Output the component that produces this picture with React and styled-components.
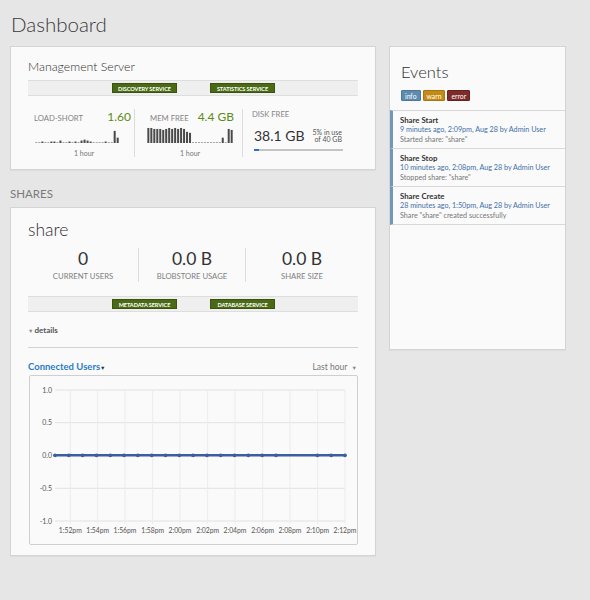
import React from "react";
import styled, { createGlobalStyle } from "styled-components";

const Global = createGlobalStyle`
  html, body { margin: 0; padding: 0; background: #e6e6e6; }
  body { font-family: Lato, "Open Sans", "Liberation Sans", sans-serif; color: #333; }
  * { box-sizing: border-box; }
`;

const Page = styled.div`
  width: 590px;
  height: 600px;
  padding: 12px 0 0 10px;
  background: #e6e6e6;
`;

const Title = styled.h1`
  margin: 0 0 9px 1px;
  font-size: 20.5px;
  font-weight: 300;
  line-height: 25px;
  color: #3a3a3a;
`;

const Columns = styled.div`
  display: flex;
  align-items: flex-start;
  gap: 13px;
`;

const LeftCol = styled.div`
  width: 366px;
  display: flex;
  flex-direction: column;
`;

const Card = styled.section`
  background: #fafafa;
  border: 1px solid #d4d4d4;
  box-shadow: 0 1px 1px rgba(0,0,0,0.04);
  width: ${p => p.$w || "366px"};
  height: ${p => p.$h || "auto"};
  padding: ${p => p.$pad || "0 17px"};
`;

const CardTitle = styled.h2`
  margin: 0;
  font-weight: ${p => p.$weight || 300};
  color: #2e2e2e;
  font-size: ${p => p.$size || "12px"};
  line-height: ${p => p.$lh || "16px"};
`;

const ServiceBar = styled.div`
  height: 16px;
  background: #efefef;
  border-top: 1px solid #dedede;
  border-bottom: 1px solid #dedede;
  display: flex;
  align-items: center;
  padding-left: 84px;
  gap: 33px;
  margin-top: ${p => p.$mt || "0"};
`;

const ServiceBadge = styled.span`
  display: inline-flex;
  align-items: center;
  justify-content: center;
  width: 65px;
  height: 10px;
  background: #4a6a16;
  border: 1px solid #3a5410;
  color: #fff;
  font-size: 5.6px;
  font-weight: 700;
  letter-spacing: -0.1px;
  white-space: nowrap;
  text-transform: uppercase;
`;

const StatsRow = styled.div`
  display: flex;
  margin-top: 13px;
  height: 48px;
`;

const StatCol = styled.div`
  width: ${p => p.$w};
  padding: ${p => p.$pad};
  border-right: ${p => (p.$last ? "none" : "1px solid #dcdcdc")};
  display: flex;
  flex-direction: column;
`;

const StatHead = styled.div`
  display: flex;
  justify-content: space-between;
  align-items: baseline;
  height: 16px;
  white-space: nowrap;
`;

const StatLabel = styled.span`
  font-size: 7.7px;
  color: #858585;
  text-transform: uppercase;
  padding-left: ${p => p.$pl || "0"};
`;

const StatValue = styled.span`
  font-size: 12px;
  color: #5a8c17;
  padding-right: ${p => p.$pr || "3px"};
`;

const Spark = styled.svg`
  display: block;
  margin-top: 2px;
`;

const HourLabel = styled.div`
  font-size: 7px;
  color: #777;
  text-align: center;
  margin-top: 6px;
`;

const DiskRow = styled.div`
  display: flex;
  align-items: center;
  gap: 8px;
  margin: 1px 0 0 2px;
`;

const DiskValue = styled.span`
  font-size: 14px;
  color: #333;
  line-height: 20px;
`;

const DiskNote = styled.span`
  font-size: 7px;
  line-height: 7.5px;
  color: #555;
  text-align: right;
`;

const DiskBar = styled.div`
  margin: 3px 0 0 2px;
  width: 89px;
  height: 2px;
  background: #c4c4c4;
`;

const DiskFill = styled.div`
  height: 100%;
  background: #2f6fd0;
`;

const SectionLabel = styled.div`
  margin: 17px 0 6px 0;
  font-size: 11.5px;
  color: #7a7a7a;
  line-height: 14px;
`;

const ShareStats = styled.div`
  display: flex;
  margin-top: 7px;
  height: 34px;
`;

const ShareStat = styled.div`
  width: ${p => p.$w};
  border-right: ${p => (p.$last ? "none" : "1px solid #dcdcdc")};
  display: flex;
  flex-direction: column;
  align-items: center;
`;

const ShareValue = styled.div`
  font-size: 17.5px;
  line-height: 20px;
  margin-top: 1px;
  color: #333;
`;

const ShareLabel = styled.div`
  font-size: 7.7px;
  color: #808080;
  text-transform: uppercase;
  margin-top: 2px;
`;

const Details = styled.div`
  margin-top: 13px;
  font-size: 8px;
  color: #555;
  font-weight: 700;
  padding-bottom: 11px;
  border-bottom: 1px solid #d3d3d3;
  line-height: 10px;
`;

const Caret = styled.span`
  font-size: 5.5px;
  color: ${p => p.$color || "#888"};
  margin-right: 1px;
`;

const ChartHead = styled.div`
  display: flex;
  justify-content: space-between;
  align-items: center;
  margin-top: 12px;
  height: 13px;
`;

const ChartTitle = styled.span`
  font-size: 9.5px;
  color: #2a7cc7;
  font-weight: 700;
`;

const RangeSelect = styled.span`
  font-size: 8.5px;
  color: #777;
`;

const ChartBox = styled.div`
  margin: 2px 0 0 1px;
  width: 329px;
  height: 170px;
  border: 1px solid #cfcfcf;
  border-radius: 2px;
  background: #fafafa;
`;

const EventsCard = styled(Card)`
  padding: 0;
`;

const EventsHeader = styled.div`
  padding: 14px 11px 0;
  height: 63px;
`;

const LevelRow = styled.div`
  display: flex;
  gap: 2px;
  margin-top: 7px;
`;

const Level = styled.span`
  display: inline-flex;
  align-items: center;
  justify-content: center;
  height: 11px;
  padding: 0 3px;
  font-size: 6.8px;
  color: #fff;
  background: ${p => p.$bg};
  border: 1px solid ${p => p.$bd};
  border-radius: 1px;
`;

const EventItem = styled.div`
  height: 38px;
  border-top: 1px solid #d8d8d8;
  border-left: 3px solid #7097b8;
  padding: 4px 0 0 7px;
  line-height: 10px;
  font-size: 7.2px;
  white-space: nowrap;
  &:last-child { border-bottom: 1px solid #d8d8d8; height: 39px; }
`;

const EventTitle = styled.div`
  font-weight: 700;
  color: #333;
  font-size: 7.8px;
`;

const EventMeta = styled.div`
  color: #3f70a8;
`;

const EventDesc = styled.div`
  color: #777;
`;

const loadBars = [1,1,2,1,1,2,2,1,3,1,1,2,1,2,1,3,4,3,2,1,1,1,1,2,1,1,13,6];
const memBars = [16,16,15,15,15,14,15,16,15,16,15,16,15,12,11,1,1,1,1,1,1,1,1,1,1,6,1,15,14];

function Sparkline({ bars, width }) {
  const h = 17;
  const step = width / bars.length;
  return (
    <Spark width={width} height={h} viewBox={`0 0 ${width} ${h}`}>
      {bars.map((b, i) => (
        <rect key={i} x={i * step} y={h - b} width={Math.max(step - 1, 1.2)} height={b} fill="#4a4a4a" />
      ))}
    </Spark>
  );
}

function Chart() {
  const left = 25;
  const right = 315;
  const ys = [14, 46.7, 79.3, 112.3, 145];
  const yl = ["1.0", "0.5", "0.0", "-0.5", "-1.0"];
  const xs = [40.3, 67.7, 95, 122.7, 150, 177.7, 205, 232.7, 260, 287.7, 315];
  const xl = ["1:52pm","1:54pm","1:56pm","1:58pm","2:00pm","2:02pm","2:04pm","2:06pm","2:08pm","2:10pm","2:12pm"];
  const pts = [];
  for (let i = 0; i <= 21; i++) {
    if (i === 17 || i === 18) continue;
    pts.push(left + (right - left) * i / 21);
  }
  return (
    <svg width="327" height="168" viewBox="0 0 327 168">
      {ys.map((y, i) => (
        <g key={i}>
          <line x1={left} x2={right} y1={y} y2={y} stroke="#e2e2e2" strokeWidth="1" />
          <text x={left - 3} y={y + 2.5} fontSize="7" textAnchor="end" fill="#555" fontFamily="Lato, sans-serif">{yl[i]}</text>
        </g>
      ))}
      {xs.map((x, i) => (
        <g key={i}>
          <line x1={x} x2={x} y1={14} y2={148} stroke="#ececec" strokeWidth="1" />
          <text x={x} y={157} fontSize="6.8" textAnchor="middle" fill="#555" fontFamily="Lato, sans-serif">{xl[i]}</text>
        </g>
      ))}
      <line x1={left} x2={right} y1={79.3} y2={79.3} stroke="#3d5d9c" strokeWidth="2.6" />
      {pts.map((x, i) => (
        <circle key={i} cx={x} cy={79.3} r="1.9" fill="#3d5d9c" />
      ))}
    </svg>
  );
}

export default function App() {
  return (
    <Page>
      <Global />
      <Title>Dashboard</Title>
      <Columns>
        <LeftCol>
          <Card $h="124px" $pad="12px 17px 0">
            <CardTitle $size="12.3px">Management Server</CardTitle>
            <ServiceBar $mt="5px">
              <ServiceBadge>Discovery Service</ServiceBadge>
              <ServiceBadge>Statistics Service</ServiceBadge>
            </ServiceBar>
            <StatsRow>
              <StatCol $w="107px" $pad="0 0 0 6px">
                <StatHead>
                  <StatLabel>Load-Short</StatLabel>
                  <StatValue>1.60</StatValue>
                </StatHead>
                <Sparkline bars={loadBars} width={87} />
                <HourLabel>1 hour</HourLabel>
              </StatCol>
              <StatCol $w="108px" $pad="0 8px 0 11px">
                <StatHead>
                  <StatLabel $pl="4px">Mem Free</StatLabel>
                  <StatValue $pr="0">4.4 GB</StatValue>
                </StatHead>
                <Sparkline bars={memBars} width={89} />
                <HourLabel>1 hour</HourLabel>
              </StatCol>
              <StatCol $w="115px" $pad="0 0 0 9px" $last>
                <StatHead>
                  <StatLabel>Disk Free</StatLabel>
                </StatHead>
                <DiskRow>
                  <DiskValue>38.1 GB</DiskValue>
                  <DiskNote>5% in use<br />of 40 GB</DiskNote>
                </DiskRow>
                <DiskBar><DiskFill style={{ width: "6%" }} /></DiskBar>
              </StatCol>
            </StatsRow>
          </Card>
          <SectionLabel>SHARES</SectionLabel>
          <Card $h="349px" $pad="11px 17px 0">
            <CardTitle $size="17.5px" $lh="22px">share</CardTitle>
            <ShareStats>
              <ShareStat $w="111px">
                <ShareValue>0</ShareValue>
                <ShareLabel>Current Users</ShareLabel>
              </ShareStat>
              <ShareStat $w="107px">
                <ShareValue>0.0 B</ShareValue>
                <ShareLabel>Blobstore Usage</ShareLabel>
              </ShareStat>
              <ShareStat $w="112px" $last>
                <ShareValue>0.0 B</ShareValue>
                <ShareLabel>Share Size</ShareLabel>
              </ShareStat>
            </ShareStats>
            <ServiceBar $mt="14px">
              <ServiceBadge>Metadata Service</ServiceBadge>
              <ServiceBadge>Database Service</ServiceBadge>
            </ServiceBar>
            <Details><Caret>▼</Caret>details</Details>
            <ChartHead>
              <ChartTitle>Connected Users<Caret $color="#333">▼</Caret></ChartTitle>
              <RangeSelect>Last hour &nbsp;<Caret>▼</Caret></RangeSelect>
            </ChartHead>
            <ChartBox><Chart /></ChartBox>
          </Card>
        </LeftCol>
        <EventsCard $w="177px" $h="304px">
          <EventsHeader>
            <CardTitle $size="16.5px" $lh="22px">Events</CardTitle>
            <LevelRow>
              <Level $bg="#5e8bb0" $bd="#4d7798">info</Level>
              <Level $bg="#c48a14" $bd="#a87510">warn</Level>
              <Level $bg="#7d2b2b" $bd="#662020">error</Level>
            </LevelRow>
          </EventsHeader>
          <EventItem>
            <EventTitle>Share Start</EventTitle>
            <EventMeta>9 minutes ago, 2:09pm, Aug 28 by Admin User</EventMeta>
            <EventDesc>Started share: "share"</EventDesc>
          </EventItem>
          <EventItem>
            <EventTitle>Share Stop</EventTitle>
            <EventMeta>10 minutes ago, 2:08pm, Aug 28 by Admin User</EventMeta>
            <EventDesc>Stopped share: "share"</EventDesc>
          </EventItem>
          <EventItem>
            <EventTitle>Share Create</EventTitle>
            <EventMeta>28 minutes ago, 1:50pm, Aug 28 by Admin User</EventMeta>
            <EventDesc>Share "share" created successfully</EventDesc>
          </EventItem>
        </EventsCard>
      </Columns>
    </Page>
  );
}
